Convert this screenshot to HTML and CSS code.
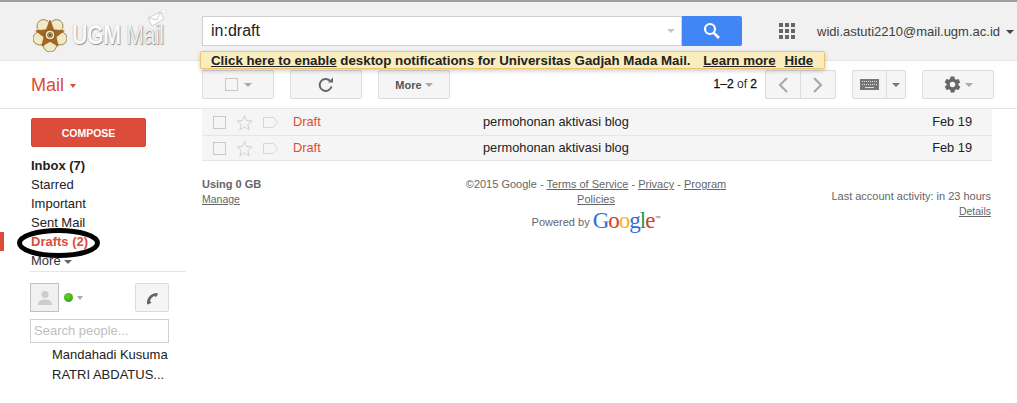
FILE: index.html
```html
<!DOCTYPE html>
<html lang="en">
<head>
<meta charset="utf-8">
<title>Drafts - Mail</title>
<link rel="stylesheet" href="styles.css">
</head>
<body>
<header class="top">
  <div class="logo">
    <svg class="emblem" width="34" height="34" viewBox="0 0 34 34">
      <g fill="#f1e8c8" stroke="#a5854a" stroke-width="1">
        <circle cx="23.500" cy="8.100" r="6.500"/><circle cx="27.500" cy="20.400" r="6.500"/><circle cx="17" cy="27.500" r="6.500"/><circle cx="6.500" cy="20.400" r="6.500"/><circle cx="10.500" cy="8.100" r="6.500"/>
      </g>
      <path d="M17 2l3.800 9.700 10.500 1-8.100 6.300 2 9.300L17 23.500l-8.200 4.800 2-9.300-8.100-6.300 10.500-1z" fill="#a9661a" stroke="#7f4d14" stroke-width=".5"/>
      <circle cx="17" cy="17" r="5" fill="#efe6cc" stroke="#6f4c1e"/>
      <circle cx="17" cy="17" r="2.500" fill="#b89a5a" stroke="#6f4c1e" stroke-width=".6"/>
      <circle cx="17" cy="17" r="1" fill="#5c3f18"/>
    </svg>
    <span class="logo-text"><span class="logo-ugm">UGM</span> <span class="logo-mail">Mail</span></span>
    <svg class="envelope" width="20" height="17" viewBox="0 0 20 17">
      <path d="M1 8L13 2l4 7-12 7z" fill="#fff" stroke="#bbb" stroke-width=".7"/>
      <path d="M1 8l9 2 3-8" fill="none" stroke="#bbb" stroke-width=".7"/>
      <rect x="14" y="0" width="5" height="3" rx="1" fill="#fff" stroke="#ccc" stroke-width=".5"/>
    </svg>
  </div>
  <div class="search">
    <div class="search-input">
      <span>in:draft</span>
      <i class="caret caret-light"></i>
    </div>
    <button class="search-btn" aria-label="Search">
      <svg width="18" height="18" viewBox="0 0 18 18"><circle cx="7" cy="7" r="5" fill="none" stroke="#fff" stroke-width="2.200"/><path d="M10.800 10.800L16 16" stroke="#fff" stroke-width="2.600"/></svg>
    </button>
  </div>
  <div class="apps">
    <i></i><i></i><i></i><i></i><i></i><i></i><i></i><i></i><i></i>
  </div>
  <div class="account">widi.astuti2210@mail.ugm.ac.id</div>
  <i class="caret caret-dark"></i>
</header>

<div class="notice">
  <a href="#">Click here to enable</a> desktop notifications for Universitas Gadjah Mada Mail.
  <a href="#" class="n-gap">Learn more</a> <a href="#" class="n-gap2">Hide</a>
</div>

<div class="toolbar">
  <div class="mail-label">Mail <i class="caret caret-red"></i></div>
  <div class="tools">
    <button class="btn"><span class="check"></span><i class="caret"></i></button>
    <button class="btn">
      <svg width="16" height="16" viewBox="0 0 16 16"><path d="M13.500 9.500A6 6 0 1 1 12 3.800" fill="none" stroke="#666" stroke-width="2"/><path d="M10 5.500h5v-5z" fill="#666"/></svg>
    </button>
    <button class="btn btn-more">More <i class="caret"></i></button>
  </div>
  <div class="tools-right">
    <div class="count"><b>1–2</b> of <b>2</b></div>
    <div class="group pager">
      <button class="seg"><svg width="12" height="16" viewBox="0 0 12 16"><path d="M10 1L3 8l7 7" fill="none" stroke="#aaa" stroke-width="2.200"/></svg></button>
      <button class="seg"><svg width="12" height="16" viewBox="0 0 12 16"><path d="M2 1l7 7-7 7" fill="none" stroke="#aaa" stroke-width="2.200"/></svg></button>
    </div>
    <div class="group kbd">
      <button class="seg seg-kbd">
        <svg width="19" height="11" viewBox="0 0 19 11"><rect width="19" height="11" fill="#777"/><path d="M2 2.500h15M2 5.500h15" stroke="#ddd" stroke-dasharray="1 1"/><path d="M5 8.500h9" stroke="#ddd"/></svg>
      </button>
      <button class="seg seg-arrow"><i class="caret caret-mid"></i></button>
    </div>
    <button class="btn btn-gear">
      <svg width="19" height="19" viewBox="0 0 24 24"><path fill="#666" d="M19.400 13c.1-.3.100-.7.100-1s0-.7-.1-1l2.100-1.600c.2-.1.200-.4.100-.6l-2-3.500c-.1-.2-.4-.3-.6-.2l-2.500 1c-.5-.4-1.100-.7-1.700-1l-.4-2.700c0-.2-.2-.4-.5-.4h-4c-.2 0-.4.200-.5.400l-.4 2.700c-.6.200-1.200.6-1.700 1l-2.500-1c-.2-.1-.5 0-.6.200l-2 3.500c-.1.200-.1.500.1.600L4.600 11c0 .3-.1.700-.1 1s0 .7.100 1l-2.100 1.600c-.2.100-.2.400-.1.600l2 3.500c.1.200.4.300.6.200l2.500-1c.5.400 1.100.7 1.700 1l.4 2.700c0 .2.200.4.500.4h4c.2 0 .4-.2.500-.4l.4-2.700c.6-.2 1.200-.6 1.700-1l2.500 1c.2.100.5 0 .6-.2l2-3.500c.1-.2.100-.5-.1-.6zM12 15.500a3.500 3.500 0 1 1 0-7 3.500 3.500 0 0 1 0 7z"/></svg>
      <i class="caret"></i>
    </button>
  </div>
</div>

<div class="body">
  <nav class="side">
    <button class="compose">COMPOSE</button>
    <ul class="labels">
      <li class="strong">Inbox (7)</li>
      <li>Starred</li>
      <li>Important</li>
      <li>Sent Mail</li>
      <li class="active">Drafts (2)</li>
      <li class="more">More <i class="caret caret-more"></i></li>
    </ul>
    <div class="people">
      <div class="me">
        <div class="avatar">
          <svg width="18" height="18" viewBox="0 0 18 18"><circle cx="9" cy="5.500" r="3.500" fill="#ccc"/><path d="M2 16c0-4 3-5.500 7-5.500s7 1.500 7 5.500z" fill="#ccc"/></svg>
        </div>
        <span class="dot"></span><i class="caret caret-small"></i>
        <button class="phone">
          <svg width="16" height="16" viewBox="0 0 16 16"><path d="M3 14C2.500 8 6.500 3.500 13 3l1 1-2 3-2-1C8 7 6.500 9 6 11l1.500 1.500-3 2z" fill="#666"/></svg>
        </button>
      </div>
      <div class="people-search">Search people...</div>
      <div class="person">Mandahadi Kusuma</div>
      <div class="person">RATRI ABDATUS...</div>
    </div>
  </nav>

  <main class="main">
    <div class="rows">
      <div class="row">
        <span class="check"></span>
        <svg class="star" width="17" height="17" viewBox="0 0 17 17"><path d="M8.500 1.500l2 5 5.500.4-4.200 3.500 1.400 5.400-4.700-3-4.700 3 1.400-5.400L1 6.900l5.500-.4z" fill="none" stroke="#d0d0d0"/></svg>
        <svg class="tag" width="15" height="11" viewBox="0 0 15 11"><path d="M.5.500h10l4 5-4 5H.5z" fill="none" stroke="#d6d6d6"/></svg>
        <span class="draft">Draft</span>
        <span class="subject">permohonan aktivasi blog</span>
        <span class="date">Feb 19</span>
      </div>
      <div class="row">
        <span class="check"></span>
        <svg class="star" width="17" height="17" viewBox="0 0 17 17"><path d="M8.500 1.500l2 5 5.500.4-4.200 3.500 1.400 5.400-4.700-3-4.700 3 1.400-5.400L1 6.900l5.500-.4z" fill="none" stroke="#d0d0d0"/></svg>
        <svg class="tag" width="15" height="11" viewBox="0 0 15 11"><path d="M.5.500h10l4 5-4 5H.5z" fill="none" stroke="#d6d6d6"/></svg>
        <span class="draft">Draft</span>
        <span class="subject">permohonan aktivasi blog</span>
        <span class="date">Feb 19</span>
      </div>
    </div>
    <footer class="foot">
      <div class="foot-l">
        <div class="usage">Using 0 GB</div>
        <a href="#">Manage</a>
      </div>
      <div class="foot-c">
        <div>©2015 Google - <a href="#">Terms of Service</a> - <a href="#">Privacy</a> - <a href="#">Program</a></div>
        <div><a href="#">Policies</a></div>
        <div class="powered">Powered by <span class="g-logo"><span class="gb">G</span><span class="gr">o</span><span class="gy">o</span><span class="gb">g</span><span class="gg">l</span><span class="gr">e</span></span><sup class="tm">™</sup></div>
      </div>
      <div class="foot-r">
        <div>Last account activity: in 23 hours</div>
        <a href="#">Details</a>
      </div>
    </footer>
  </main>
</div>

<svg class="circle" width="83" height="30" viewBox="0 0 83 30"><ellipse cx="41.500" cy="15" rx="39" ry="12.500" fill="none" stroke="#000" stroke-width="5"/></svg>
</body>
</html>
```
FILE: styles.css
```css
* { box-sizing: border-box; }
html, body { margin: 0; padding: 0; }
body {
  width: 1017px;
  height: 403px;
  overflow: hidden;
  position: relative;
  background: #fff;
  font-family: "Liberation Sans", Arial, sans-serif;
  font-size: 12px;
  color: #222;
}
ul { list-style: none; margin: 0; padding: 0; }
button { font-family: inherit; margin: 0; padding: 0; }
a { color: inherit; }

.caret {
  display: inline-block;
  width: 0;
  height: 0;
  border-left: 4px solid transparent;
  border-right: 4px solid transparent;
  border-top: 4px solid #aaa;
}
.caret-light { border-top-color: #c8c8c8; }
.caret-dark { border-top-color: #444; margin-left: 6px; }
.caret-red { border-top-color: #dd4b39; border-left-width: 3.500px; border-right-width: 3.500px; vertical-align: 3px; margin-left: 1px; }
.caret-mid { border-top-color: #777; }
.caret-more { border-top-color: #666; vertical-align: 1px; }
.caret-small { margin-left: 4px; border-left-width: 3.500px; border-right-width: 3.500px; }

.top {
  height: 61px;
  background: #f1f1f1;
  border-top: 2px solid #a0a0a0;
  border-bottom: 1px solid #e5e5e5;
  display: flex;
  align-items: flex-start;
  padding-top: 14px;
}
.logo {
  position: relative;
  width: 202px;
  height: 36px;
  padding: 2px 0 0 33px;
  display: flex;
  align-items: center;
  gap: 5px;
}
.logo-text {
  font-size: 27px;
  letter-spacing: -.5px;
  color: #fafafa;
  text-shadow: 1px 1px 1px #8f8f8f, 0 0 1px #aaa;
  transform: scaleX(.79);
  transform-origin: left;
  white-space: nowrap;
}
.logo-ugm { font-weight: 700; }
.logo-mail { font-weight: 400; color: #f0f0f0; }
.emblem { flex: none; }
.envelope { position: absolute; left: 147px; top: -6px; }
.search { display: flex; width: 540px; height: 30px; }
.search-input {
  width: 480px;
  background: #fff;
  border: 1px solid #d0d0d0;
  display: flex;
  align-items: center;
  justify-content: space-between;
  padding: 0 6px 0 8px;
  font-size: 16px;
  color: #222;
}
.search-btn {
  width: 60px;
  border: 0;
  background: #4285f4;
  border-radius: 0 2px 2px 0;
  display: flex;
  align-items: center;
  justify-content: center;
}
.apps {
  margin: 7px 0 0 37px;
  width: 16px;
  display: grid;
  grid-template-columns: repeat(3, 4px);
  grid-auto-rows: 4px;
  gap: 2px;
}
.apps i { background: #666; display: block; }
.account {
  margin: 8px 0 0 22px;
  font-size: 13px;
  color: #404040;
  white-space: nowrap;
}
.top > .caret-dark { margin-top: 14px; }

.notice {
  position: absolute;
  left: 200px;
  top: 51px;
  width: 625px;
  height: 18px;
  background: #f9edbe;
  border: 1px solid #f0c36d;
  border-radius: 2px;
  box-shadow: 0 2px 4px rgba(0,0,0,.2);
  font-size: 13.300px;
  font-weight: 700;
  line-height: 17px;
  padding-left: 10px;
  color: #222;
  white-space: nowrap;
}
.n-gap { margin-left: 9px; }
.n-gap2 { margin-left: 5px; }

.toolbar {
  height: 48px;
  display: flex;
  align-items: flex-start;
  padding-top: 9px;
  border-bottom: 1px solid #e5e5e5;
}
.mail-label {
  width: 202px;
  padding: 5px 0 0 31px;
  font-size: 18px;
  color: #dd4b39;
}
.tools { display: flex; gap: 16px; }
.btn {
  width: 72px;
  height: 29px;
  background: #f5f5f5;
  border: 1px solid #dcdcdc;
  border-radius: 2px;
  display: flex;
  align-items: center;
  justify-content: center;
  gap: 6px;
}
.btn-more { font-size: 11px; font-weight: 700; color: #555; gap: 3px; }
.tools-right { margin-left: auto; display: flex; padding-right: 23px; }
.count { padding-top: 7px; margin-right: 8px; font-size: 12px; color: #333; }
.count b { font-weight: 400; color: #111; -webkit-text-stroke: .3px #111; }
.group {
  display: flex;
  height: 29px;
  border: 1px solid #dcdcdc;
  border-radius: 2px;
  background: #f5f5f5;
}
.pager { width: 71px; margin-right: 16px; }
.kbd { width: 54px; margin-right: 16px; }
.seg {
  border: 0;
  background: transparent;
  flex: 1;
  display: flex;
  align-items: center;
  justify-content: center;
}
.seg + .seg { border-left: 1px solid #dcdcdc; }
.seg-arrow { flex: 0 0 19px; }
.btn-gear { gap: 3px; }

.check {
  display: block;
  width: 13px;
  height: 13px;
  border: 1px solid #c8c8c8;
  background: transparent;
  flex: none;
}

.body { display: flex; }
.side { width: 202px; flex: none; padding-top: 9px; }
.compose {
  display: block;
  margin-left: 31px;
  width: 115px;
  height: 29px;
  border: 1px solid #d14836;
  border-radius: 2px;
  background: #dc4c3a;
  color: #fff;
  font-size: 10.500px;
  font-weight: 700;
}
.labels { margin-top: 9px; line-height: 19px; font-size: 13px; }
.labels li { padding-left: 31px; height: 19px; }
.labels .strong { font-weight: 700; }
.labels .active {
  color: #dd4b39;
  font-weight: 700;
  border-left: 4px solid #dd4b39;
  padding-left: 27px;
}
.labels .more { color: #333; }

.people { margin: 1px 0 0 30px; }
.me {
  width: 156px;
  border-top: 1px solid #e5e5e5;
  padding-top: 11px;
  display: flex;
  align-items: center;
  height: 41px;
}
.avatar {
  width: 29px;
  height: 29px;
  background: #f1f1f1;
  border: 1px solid #c0c0c0;
  display: flex;
  align-items: center;
  justify-content: center;
}
.dot {
  width: 9px;
  height: 9px;
  margin-left: 5px;
  border-radius: 50%;
  background: radial-gradient(circle at 40% 35%, #5fd32a, #2a9d10);
}
.phone {
  width: 34px;
  height: 29px;
  margin-left: 52px;
  background: #f5f5f5;
  border: 1px solid #dcdcdc;
  border-radius: 2px;
  display: flex;
  align-items: center;
  justify-content: center;
}
.people-search {
  margin-top: 7px;
  width: 139px;
  height: 24px;
  border: 1px solid #d0d0d0;
  padding: 3px 3px;
  font-size: 13px;
  color: #c0c0c0;
}
.person { margin-left: 22px; line-height: 20px; font-size: 13px; color: #222; }
.people-search + .person { margin-top: 2px; }

.main { width: 790px; flex: none; }
.rows { border-bottom: 1px solid #e5e5e5; }
.row {
  height: 26px;
  background: #f5f5f5;
  display: flex;
  align-items: center;
  font-size: 12.800px;
  color: #222;
}
.row + .row { border-top: 1px solid #e5e5e5; height: 25px; }
.row .check { margin-left: 11px; }
.star { margin-left: 10px; }
.tag { margin-left: 10px; }
.draft, .subject, .date { margin-bottom: 2px; }
.draft { color: #dd4b39; margin-left: 15px; width: 190px; }
.subject { flex: 1; }
.date { padding-right: 20px; }

.foot {
  display: grid;
  grid-template-columns: 259px 270px 1fr;
  padding-top: 16px;
  font-size: 11px;
  color: #666;
  line-height: 15px;
}
.foot-l a, .foot-r a { font-size: 10.500px; }
.usage { font-weight: 700; }
.foot-c { text-align: center; line-height: 15px; }
.foot-r { text-align: right; padding-top: 12px; padding-right: 1px; }
.powered { margin-top: 6px; font-size: 11px; }
.g-logo {
  font-family: "Liberation Serif", serif;
  font-size: 23px;
  letter-spacing: -1px;
  vertical-align: -2px;
}
.gb { color: #2d6ed8; }
.gr { color: #d83a2c; }
.gy { color: #efb21c; }
.gg { color: #1f9a50; }
.tm { font-size: 6px; vertical-align: 6px; line-height: 0; }

.circle { position: absolute; left: 17px; top: 228px; }
```
